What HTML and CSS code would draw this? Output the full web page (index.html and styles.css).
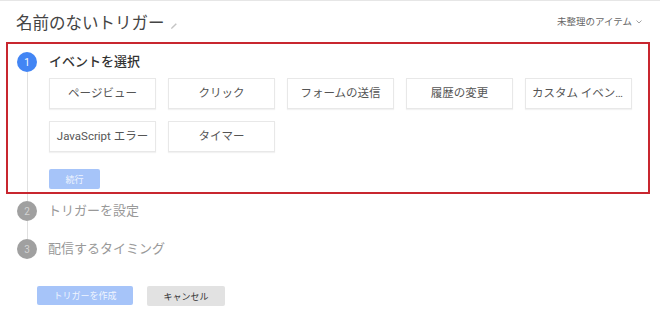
FILE: index.html
```html
<!doctype html>
<html>
<head>
<meta charset="utf-8">
<title>トリガー</title>
<link rel="stylesheet" href="styles.css">
</head>
<body>
<div class="page">
	<div class="head">
		<h1 class="title">名前のないトリガー
			<svg class="pencil" width="8" height="8" viewBox="0 0 8 8"><path d="M1 7 L1.4 5.6 L5.8 1.2 L6.8 2.2 L2.4 6.6 Z" fill="#c4c4c4"/></svg>
		</h1>
		<div class="folder">未整理のアイテム
			<svg class="chev" width="6" height="4" viewBox="0 0 6 4"><path d="M0.5 0.5 L3 3 L5.5 0.5" fill="none" stroke="#999" stroke-width="0.9"/></svg>
		</div>
	</div>

	<div class="stepbox">
		<div class="rail">
			<span class="num num-on">1</span>
			<span class="line"></span>
		</div>
		<div class="body">
			<h2 class="step-title">イベントを選択</h2>
			<ul class="types">
				<li>ページビュー</li>
				<li>クリック</li>
				<li>フォームの送信</li>
				<li>履歴の変更</li>
				<li>カスタム イベント</li>
				<li>JavaScript エラー</li>
				<li>タイマー</li>
			</ul>
			<button class="btn btn-blue btn-next">続行</button>
		</div>
	</div>

	<div class="steps">
		<span class="conn conn-short"></span>
		<div class="step">
			<span class="num">2</span>
			<span class="step-label">トリガーを設定</span>
		</div>
		<span class="conn"></span>
		<div class="step">
			<span class="num">3</span>
			<span class="step-label">配信するタイミング</span>
		</div>
	</div>

	<div class="actions">
		<button class="btn btn-blue btn-create">トリガーを作成</button>
		<button class="btn btn-gray">キャンセル</button>
	</div>
</div>
</body>
</html>
```

FILE: styles.css
```css
body,ul,h1,h2 { margin:0; padding:0;}
li { list-style:none;}
body { background:#fff; font-family:Roboto, "Noto Sans CJK JP", sans-serif; color:#333;}

.page { border-top:1px solid #e6e6e6; height:318px;}

.head { display:flex; justify-content:space-between; align-items:flex-start; height:41px; padding:0 18px 0 16px;}
.title { font-size:16.5px; font-weight:400; line-height:20px; color:#444; margin-top:13px; display:flex; align-items:center;}
.pencil { margin:3px 0 0 5px;}
.folder { font-size:9.5px; line-height:12px; color:#666; margin-top:15px; display:flex; align-items:center;}
.chev { margin-left:4px;}

.stepbox { display:flex; margin:0 10px 0 6px; height:140px; border:2px solid #c8262f; padding:8px 0 0 9px;}
.rail { display:flex; flex-direction:column; align-items:center; width:20px;}
.line { flex:1; width:1px; background:#e0e0e0;}
.num { display:flex; align-items:center; justify-content:center; width:20px; height:20px; border-radius:50%; background:#a0a0a0; color:rgba(255,255,255,.55); font-size:10px; flex-shrink:0;}
.num-on { background:#4285f4; color:#fff;}

.body { margin-left:12px;}
.step-title { font-size:13px; font-weight:500; line-height:20px; color:#333;}
.types { display:grid; grid-template-columns:repeat(5, 107px); grid-auto-rows:31px; gap:12px; margin-top:6px;}
.types li { display:block; box-sizing:border-box; border:1px solid #e8e8e8; box-shadow:0 1px 1px rgba(0,0,0,.05); font-size:11.5px; line-height:29px; color:#555; text-align:center; padding:0 6px; white-space:nowrap; overflow:hidden; text-overflow:ellipsis;}

.btn { border:none; font-family:inherit; font-size:9px; padding:0; border-radius:2px;}
.btn-blue { background:#a6c4f9; color:rgba(255,255,255,.85);}
.btn-gray { background:#e2e2e2; color:#333;}
.btn-next { display:block; width:51px; height:20px; margin-top:17px;}

.steps { display:flex; flex-direction:column; padding-left:17px;}
.conn { display:block; width:1px; height:18px; margin-left:10px; background:#e0e0e0;}
.conn-short { height:7px;}
.step { display:flex; align-items:center; gap:11px; height:20px;}
.step-label { font-size:13px; color:#999; line-height:20px;}

.actions { display:flex; gap:14px; padding:27px 0 0 37px;}
.btn-create { width:96px; height:19px;}
.btn-gray { width:78px; height:20px;}
```
